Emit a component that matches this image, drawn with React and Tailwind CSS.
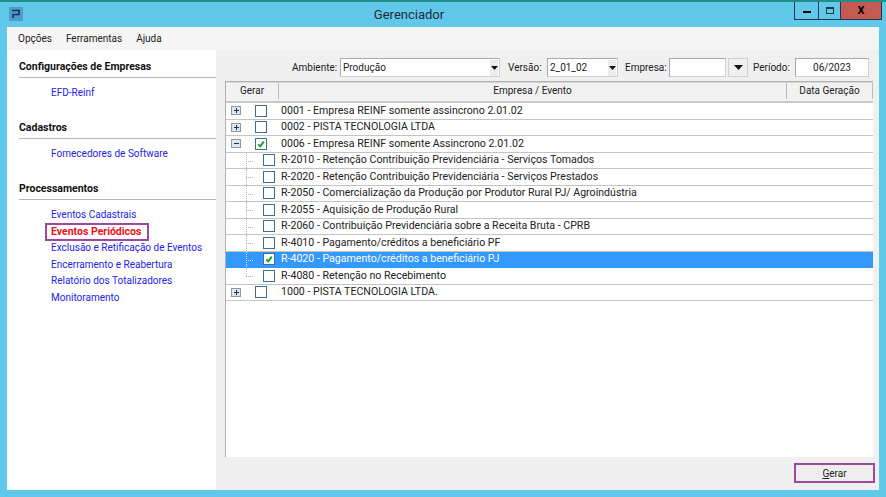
import React from 'react';

const font = "font-['Roboto','Liberation_Sans',sans-serif]";

const Check = ({ checked }) => (
  <div className="w-[12px] h-[12px] border border-[#3f6f96] bg-white flex items-center justify-center shrink-0">
    {checked && (
      <svg width="8" height="8" viewBox="0 0 10 10">
        <path d="M1.5 5.5 L4 8 L8.5 2" fill="none" stroke="#12a02c" strokeWidth="2.4" />
      </svg>
    )}
  </div>
);

const Toggle = ({ open }) => (
  <div className="w-[10px] h-[9px] border border-[#8c9aa8] bg-[#dce4ee] flex items-center justify-center shrink-0 relative">
    <div className="w-[5px] h-px bg-[#1f3050]" />
    {!open && <div className="absolute w-px h-[5px] bg-[#1f3050]" />}
  </div>
);

const ParentRow = ({ text, open, checked }) => (
  <div className="h-[16.5px] border-b border-[#c4c4c4] flex items-center text-[#222]">
    <div className="w-[20px] pl-[5px] flex items-center"><Toggle open={open} /></div>
    <div className="w-[15px] ml-[9px]"><Check checked={checked} /></div>
    <div className="ml-[11px] whitespace-nowrap">{text}</div>
  </div>
);

const ChildRow = ({ text, checked, selected, last }) => (
  <div className={`h-[16.5px] border-b flex items-center relative ${selected ? 'bg-[#3399ff] text-white border-[#3399ff]' : 'text-[#222] border-[#c4c4c4]'}`}>
    <div className={`absolute left-[20px] top-0 w-px border-l border-dotted ${selected ? 'border-[#d5e8fb]' : 'border-[#b8b8b8]'} ${last ? 'h-[8px]' : 'h-full'}`} />
    <div className={`absolute left-[20px] top-[8px] w-[7px] border-t border-dotted ${selected ? 'border-[#d5e8fb]' : 'border-[#b8b8b8]'}`} />
    <div className="ml-[37px]"><Check checked={checked} /></div>
    <div className="ml-[6px] whitespace-nowrap">{text}</div>
  </div>
);

const Section = ({ title, children, className }) => (
  <div className={className}>
    <div className="font-bold text-[#111] text-[10.5px] leading-[14px] ml-[12px] pb-[3px] border-b border-[#b5b5b5]">{title}</div>
    <div className="ml-[44px] mt-[7px] flex flex-col text-[10px]">{children}</div>
  </div>
);

const Link = ({ children }) => <div className="h-[16.5px] leading-[16px] text-[#2323f0] whitespace-nowrap">{children}</div>;

const Label = ({ children, className }) => <span className={`text-[#222] text-[10px] whitespace-nowrap ${className || ''}`}>{children}</span>;

const SmallArrow = () => (
  <svg width="7" height="4" viewBox="0 0 7 4"><path d="M0 0 H7 L3.5 4 Z" fill="#111" /></svg>
);

const Select = ({ value, className }) => (
  <div className={`h-[19px] border border-[#d0d0d0] border-t-[#aaa] border-l-[#aaa] bg-white flex items-center justify-between pl-[2px] text-[10px] ${className}`}>
    <span className="text-[#222]">{value}</span>
    <div className="w-[8px] h-[16px] mr-px bg-[#ececec] flex items-center justify-center"><SmallArrow /></div>
  </div>
);

export default function App() {
  return (
    <div className={`w-[886px] h-[497px] overflow-hidden bg-[#62c8ea] border-t-2 border-[#1f8f8a] flex flex-col text-[10.6px] ${font}`}>
      <div className="h-[25px] flex items-start relative shrink-0">
        <div className="ml-[9px] mt-[5px] w-[14px] h-[14px] bg-[#4d9cc9] flex items-center justify-center">
          <svg width="10" height="10" viewBox="0 0 10 10">
            <path d="M1 1.5 H8 V5.5 H3 M1 5.5 H2 V9" fill="none" stroke="#12305a" strokeWidth="1.6" />
          </svg>
        </div>
        <div className="flex-1 text-center text-[13px] leading-[26px] text-[#1c2c3a] pr-[91px]">Gerenciador</div>
        <div className="absolute right-[4px] top-0 flex h-[18px] border border-t-0 border-[#1d3a4c]">
          <div className="w-[24px] flex items-center justify-center border-r border-[#1d3a4c]">
            <div className="w-[8px] h-[2px] bg-black mt-[3px]" />
          </div>
          <div className="w-[22px] flex items-center justify-center border-r border-[#1d3a4c]">
            <div className="w-[8px] h-[7px] border border-[#1d3a4c] border-t-2" />
          </div>
          <div className="w-[40px] bg-[#c55a52] flex items-center justify-center text-black font-bold text-[11px] leading-none">X</div>
        </div>
      </div>

      <div className="mx-[7px] mb-[7px] flex-1 flex flex-col bg-[#f0f0f0] min-h-0">
        <div className="h-[23px] bg-[#f5f5f5] flex items-center pl-[11px] gap-[14px] shrink-0 text-[#222] text-[10px]">
          <span>Opções</span>
          <span>Ferramentas</span>
          <span>Ajuda</span>
        </div>

        <div className="flex-1 flex min-h-0">
          <div className="w-[209px] bg-white pt-[10px] shrink-0">
            <Section title="Configurações de Empresas">
              <Link>EFD-Reinf</Link>
            </Section>
            <Section title="Cadastros" className="mt-[19px]">
              <Link>Fornecedores de Software</Link>
            </Section>
            <Section title="Processamentos" className="mt-[20px]">
              <Link>Eventos Cadastrais</Link>
              <div className="h-[16.5px] leading-[15px] relative font-bold text-[10.5px] text-[#f01020] whitespace-nowrap">
                Eventos Periódicos
                <div className="absolute -left-[6px] -top-[1px] w-[104px] h-[18px] border-2 border-[#a0479f]" />
              </div>
              <Link>Exclusão e Retificação de Eventos</Link>
              <Link>Encerramento e Reabertura</Link>
              <Link>Relatório dos Totalizadores</Link>
              <Link>Monitoramento</Link>
            </Section>
          </div>

          <div className="flex-1 flex flex-col pl-[9px] pr-[6px] min-w-0">
            <div className="h-[31px] flex items-center shrink-0 pt-[4px]">
              <Label className="w-[48px] ml-[67px]">Ambiente:</Label>
              <Select value="Produção" className="w-[160px]" />
              <Label className="w-[39px] ml-[8px]">Versão:</Label>
              <Select value="2_01_02" className="w-[71px]" />
              <Label className="w-[44px] ml-[7px]">Empresa:</Label>
              <div className="w-[57px] h-[19px] bg-white border border-[#d0d0d0] border-t-[#aaa] border-l-[#aaa]" />
              <div className="ml-[2px] w-[20px] h-[19px] bg-[#f0f0f0] border border-[#d0d0d0] flex items-center justify-center">
                <svg width="9" height="5" viewBox="0 0 9 5"><path d="M0 0 H9 L4.5 5 Z" fill="#111" /></svg>
              </div>
              <Label className="w-[42px] ml-[5px]">Período:</Label>
              <div className="w-[74px] h-[19px] bg-white border border-[#d0d0d0] border-t-[#aaa] border-l-[#aaa] flex items-center justify-center text-[#222] text-[10px]">06/2023</div>
            </div>

            <div className="h-[376px] bg-white border border-[#b0b0b0] border-r-0 border-b-0 shrink-0">
              <div className="h-[21px] flex bg-[#f2f2f2] border-b-2 border-[#c8c8c8] text-[#222] border-t border-t-[#d8d8d8] text-[10px]">
                <div className="w-[52px] text-center leading-[16px]">Gerar</div>
                <div className="flex-1 text-center leading-[16px] border-l border-[#bdbdbd] h-[16px]">Empresa / Evento</div>
                <div className="w-[87px] text-center leading-[16px] border-x border-[#bdbdbd] h-[16px]">Data Geração</div>
              </div>
              <ParentRow text="0001 - Empresa REINF somente assincrono 2.01.02" />
              <ParentRow text="0002 - PISTA TECNOLOGIA LTDA" />
              <ParentRow text="0006 - Empresa REINF somente Assincrono 2.01.02" open checked />
              <ChildRow text="R-2010 - Retenção Contribuição Previdenciária - Serviços Tomados" />
              <ChildRow text="R-2020 - Retenção Contribuição Previdenciária - Serviços Prestados" />
              <ChildRow text="R-2050 - Comercialização da Produção por Produtor Rural PJ/ Agroindústria" />
              <ChildRow text="R-2055 - Aquisição de Produção Rural" />
              <ChildRow text="R-2060 - Contribuição Previdenciária sobre a Receita Bruta - CPRB" />
              <ChildRow text="R-4010 - Pagamento/créditos a beneficiário PF" />
              <ChildRow text="R-4020 - Pagamento/créditos a beneficiário PJ" checked selected />
              <ChildRow text="R-4080 - Retenção no Recebimento" last />
              <ParentRow text="1000 - PISTA TECNOLOGIA LTDA." />
            </div>

            <div className="flex justify-end mt-[6px]">
              <div className="w-[81px] h-[20px] -mr-[2px] border-2 border-[#a0479f] bg-[#eeeeee] flex items-center justify-center text-[#222] text-[10px]">
                <span><span className="underline">G</span>erar</span>
              </div>
            </div>
          </div>
        </div>
      </div>
    </div>
  );
}
